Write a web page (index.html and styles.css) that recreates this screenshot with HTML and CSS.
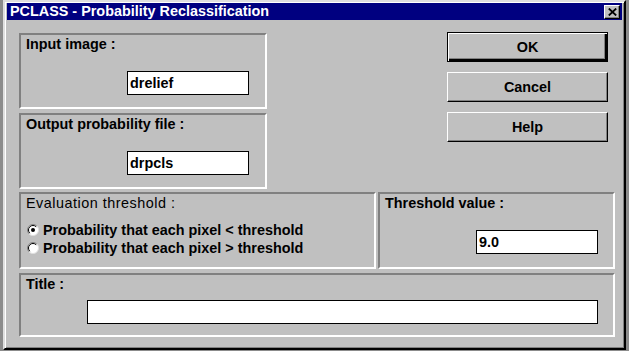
FILE: index.html
```html
<!DOCTYPE html>
<html lang="en">
<head>
  <meta charset="UTF-8">
  <title>PCLASS - Probability Reclassification</title>
  <link rel="stylesheet" href="styles.css">
</head>
<body>

  <div class="window">
    <div class="titlebar">
      <span class="title">PCLASS - Probability Reclassification</span>
      <button class="close" aria-label="Close">
        <svg width="9" height="8" viewBox="0 0 9 8">
          <path d="M0.8 0.5 L8.2 7.5 M8.2 0.5 L0.8 7.5" stroke="#000" stroke-width="1.8"/>
        </svg>
      </button>
    </div>

    <div class="content">
      <div class="top-row">
        <div class="files">
          <div class="group file-group">
            <div class="label">Input image :</div>
            <div class="field file-field">drelief</div>
          </div>
          <div class="group file-group">
            <div class="label">Output probability file :</div>
            <div class="field file-field">drpcls</div>
          </div>
        </div>

        <div class="buttons">
          <button class="btn default">OK</button>
          <button class="btn">Cancel</button>
          <button class="btn">Help</button>
        </div>
      </div>

      <div class="mid-row">
        <div class="group eval-group">
          <div class="label plain">Evaluation threshold :</div>
          <div class="radios">
            <div class="radio">
              <svg width="12" height="12" viewBox="0 0 12 12">
                <circle cx="6" cy="6" r="5.5" fill="#fff"/>
                <path d="M2.1 9.9 A5.5 5.5 0 0 1 9.9 2.1" stroke="#808080" stroke-width="1" fill="none"/>
                <path d="M9.9 2.1 A5.5 5.5 0 0 1 2.1 9.9" stroke="#dfdfdf" stroke-width="1" fill="none"/>
                <path d="M2.8 9.2 A4.5 4.5 0 0 1 9.2 2.8" stroke="#000" stroke-width="1" fill="none"/>
                <circle cx="6" cy="6" r="2" fill="#000"/>
              </svg>
              <span>Probability that each pixel &lt; threshold</span>
            </div>
            <div class="radio">
              <svg width="12" height="12" viewBox="0 0 12 12">
                <circle cx="6" cy="6" r="5.5" fill="#fff"/>
                <path d="M2.1 9.9 A5.5 5.5 0 0 1 9.9 2.1" stroke="#808080" stroke-width="1" fill="none"/>
                <path d="M9.9 2.1 A5.5 5.5 0 0 1 2.1 9.9" stroke="#dfdfdf" stroke-width="1" fill="none"/>
                <path d="M2.8 9.2 A4.5 4.5 0 0 1 9.2 2.8" stroke="#000" stroke-width="1" fill="none"/>
              </svg>
              <span>Probability that each pixel &gt; threshold</span>
            </div>
          </div>
        </div>

        <div class="group value-group">
          <div class="label">Threshold value :</div>
          <div class="field value-field">9.0</div>
        </div>
      </div>

      <div class="group title-group">
        <div class="label">Title :</div>
        <div class="field title-field"></div>
      </div>
    </div>
  </div>

</body>
</html>
```

FILE: styles.css
```css
body {
  margin: 0;
  background-color: #8c8c8c;
  font-family: "Liberation Sans", Arial, sans-serif;
  font-size: 14.4px;
  font-weight: bold;
  color: #000;
}

.window {
  box-sizing: border-box;
  width: 623px;
  height: 350px;
  margin-left: 3px;
  background-color: #c0c0c0;
  border: 2px solid;
  border-color: #dfdfdf #000 #000 #dfdfdf;
  box-shadow: inset 1px 1px #fff, inset -1px -1px #808080;
  padding: 1px 2px 2px 2px;
}

.titlebar {
  height: 17px;
  background-color: #000080;
  display: flex;
  align-items: center;
  justify-content: space-between;
  padding: 0 2px 0 3px;
}

.title {
  color: #fff;
  line-height: 17px;
}

.close {
  box-sizing: border-box;
  width: 16px;
  height: 14px;
  padding: 0;
  background-color: #c0c0c0;
  border: 1px solid;
  border-color: #fff #000 #000 #fff;
  box-shadow: inset -1px -1px #808080;
  display: flex;
  align-items: center;
  justify-content: center;
}

.content {
  padding: 13px 7px 0 12px;
}

.top-row {
  display: flex;
}

.files {
  width: 248px;
  display: flex;
  flex-direction: column;
  gap: 4px;
}

.group {
  box-sizing: border-box;
  border: 2px solid;
  border-color: #808080 #fff #fff #808080;
  padding: 1px 5px 0 5px;
}

.label {
  line-height: 16px;
  white-space: nowrap;
}

.label.plain {
  font-weight: normal;
  letter-spacing: 0.5px;
}

.field {
  box-sizing: border-box;
  height: 24px;
  background-color: #fff;
  border: 1px solid #000;
  padding: 0 2px;
  line-height: 22px;
}

.file-group {
  height: 76px;
}

.file-field {
  width: 122px;
  margin: 19px 0 0 101px;
}

.buttons {
  margin-left: auto;
  margin-right: 7px;
  margin-top: -1px;
  display: flex;
  flex-direction: column;
  gap: 10px;
}

.btn {
  box-sizing: border-box;
  width: 161px;
  height: 30px;
  font-family: inherit;
  font-size: 14.4px;
  font-weight: bold;
  background-color: #c0c0c0;
  border: 1px solid;
  border-color: #fff #000 #000 #fff;
  box-shadow: inset -1px -1px #808080;
  padding: 0;
}

.btn.default {
  border: 1px solid #000;
  box-shadow: inset 1px 1px #fff, inset -2px -2px #000, inset -3px -3px #808080;
}

.mid-row {
  display: flex;
  gap: 2px;
  margin-top: 3px;
}

.eval-group {
  width: 357px;
  height: 77px;
}

.radios {
  margin-top: 10px;
}

.radio {
  display: flex;
  align-items: center;
  height: 18px;
  white-space: nowrap;
}

.radio svg {
  flex-shrink: 0;
  margin: 0 4px 0 1px;
}

.value-group {
  width: 237px;
  height: 77px;
}

.value-field {
  width: 122px;
  margin: 19px 0 0 91px;
}

.title-group {
  width: 596px;
  height: 64px;
  margin-top: 4px;
}

.title-field {
  width: 511px;
  margin: 8px 0 0 61px;
}
```
